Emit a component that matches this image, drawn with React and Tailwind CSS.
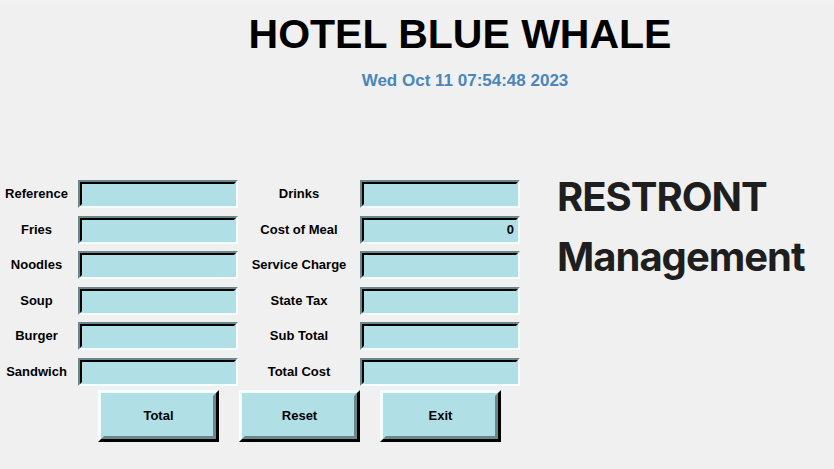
import React from 'react';

const leftRows = ['Reference', 'Fries', 'Noodles', 'Soup', 'Burger', 'Sandwich'];
const rightRows = [
  { label: 'Drinks', value: '' },
  { label: 'Cost of Meal', value: '0' },
  { label: 'Service Charge', value: '' },
  { label: 'State Tax', value: '' },
  { label: 'Sub Total', value: '' },
  { label: 'Total Cost', value: '' },
];

// sunken Tk-style entry
const Entry = ({ value }) => (
  <div className="w-[160px] h-[28px] border-2 border-t-[#6a888b] border-l-[#6a888b] border-b-[#f4ffff] border-r-[#f4ffff]">
    <div className="h-full border-2 border-t-black border-l-black border-b-[#b0e0e6] border-r-[#b0e0e6] bg-[#b0e0e6] flex items-center justify-end pr-[2px] text-[13px] font-bold text-black">
      {value}
    </div>
  </div>
);

// raised Tk-style button
const Btn = ({ children }) => (
  <button className="w-[121px] h-[52px] border-[3px] border-t-[#f4ffff] border-l-[#f4ffff] border-b-black border-r-black p-0">
    <div className="h-full border-[3px] border-t-[#b0e0e6] border-l-[#b0e0e6] border-b-[#6a888b] border-r-[#6a888b] bg-[#b0e0e6] flex items-center justify-center text-[13px] font-bold text-black">
      {children}
    </div>
  </button>
);

const App = () => {
  return (
    <div className="w-full h-[469px] bg-[#f0f0f0] overflow-hidden" style={{ fontFamily: '"Liberation Sans", Arial, sans-serif' }}>
      <div className="h-[3px] bg-gradient-to-b from-[#f6eef8] to-[#f0f0f0]"></div>

      <div className="h-[163.5px]">
        <div className="pt-[11px] pl-[86px] flex justify-center">
          <h1 className="text-[41px] leading-none font-bold text-black">HOTEL BLUE WHALE</h1>
        </div>
        <div className="mt-[17px] pl-[96px] flex justify-center">
          <p className="text-[17px] leading-none font-bold text-[#4a86bb]">Wed Oct 11 07:54:48 2023</p>
        </div>
      </div>

      <div className="flex items-start">
        <div className="pt-[13.5px]">
          <div className="flex flex-col gap-y-[7.5px]">
            {leftRows.map((l, i) => (
              <div key={l} className="flex items-center">
                <div className="w-[73px] text-center text-[13px] font-bold text-black">{l}</div>
                <div className="ml-[5px]"><Entry /></div>
                <div className="w-[122px] text-center text-[13px] font-bold text-black">{rightRows[i].label}</div>
                <Entry value={rightRows[i].value} />
              </div>
            ))}
          </div>
          <div className="flex gap-[20px] pl-[98px] mt-[4px]">
            <Btn>Total</Btn>
            <Btn>Reset</Btn>
            <Btn>Exit</Btn>
          </div>
        </div>

        <div className="ml-[37px] text-[40px] leading-[60px] font-bold tracking-tight text-[#1e1e1e]" style={{ fontFamily: 'Inter, sans-serif' }}>
          <div>RESTRONT</div>
          <div>Management</div>
        </div>
      </div>
    </div>
  );
};

export default App;
